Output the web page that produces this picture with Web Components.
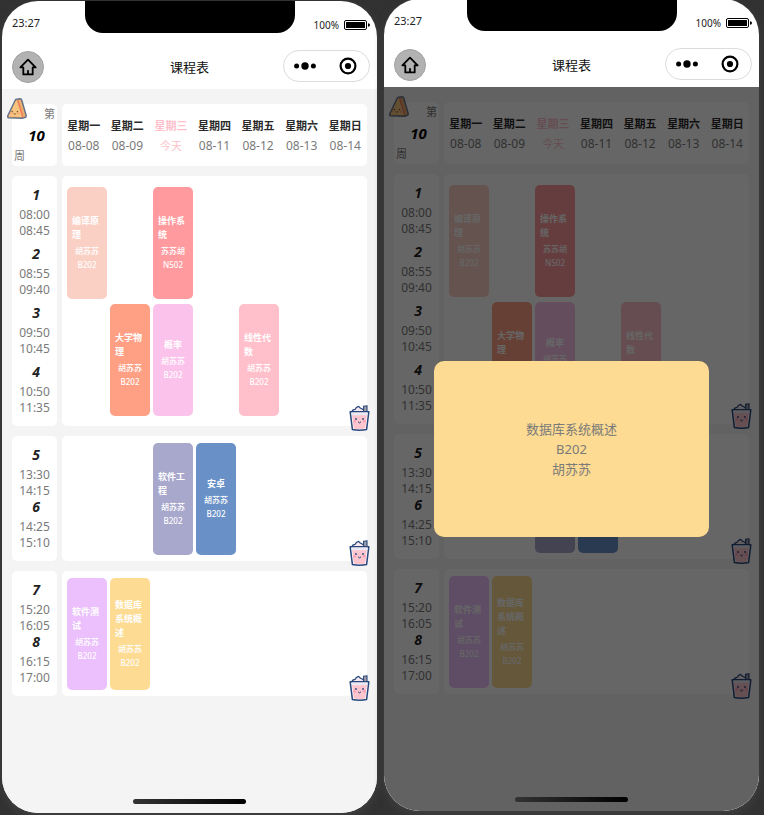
<!DOCTYPE html>
<html lang="zh-CN">
<head>
<meta charset="utf-8">
<title>课程表</title>
<style>
html { background: #fff; }
body {
  margin: 0;
  color: #7a7a7a;
  font-family: "Noto Sans", "Noto Sans CJK SC", sans-serif;
  font-size: 12px;
  line-height: 16px;
}
</style>
</head>
<body>
<phone-stage>
  <phone-frame>
    <status-bar></status-bar>
    <nav-bar>课程表</nav-bar>
    <class-schedule slot="page"></class-schedule>
  </phone-frame>
  <phone-frame>
    <status-bar></status-bar>
    <nav-bar>课程表</nav-bar>
    <class-schedule slot="page"></class-schedule>
    <course-dialog slot="page">
      <p>数据库系统概述</p>
      <p>B202</p>
      <p>胡苏苏</p>
    </course-dialog>
  </phone-frame>
</phone-stage>

<script>
function define(name, html, setup) {
  const template = document.createElement('template');
  template.innerHTML = html;
  customElements.define(name, class extends HTMLElement {
    connectedCallback() {
      if (this.shadowRoot) return;
      const root = this.attachShadow({ mode: 'open' });
      root.append(template.content.cloneNode(true));
      if (setup) setup(this, root);
    }
  });
}

define('phone-stage', `
<style>
:host {
  display: flex; align-items: flex-start; gap: 7px; box-sizing: border-box;
  min-height: 100vh; margin: -1px 3px 0 0; padding: 0 5px 2px 2px;
  background: #323232; overflow: hidden;
}
::slotted(*) { flex: 1; min-width: 0; }
::slotted(:first-child) { align-self: flex-end; }
</style>
<slot></slot>`);

define('phone-frame', `
<style>
:host {
  display: flex; flex-direction: column; position: relative;
  min-height: calc(100vh - 4px); background: #fff;
  border-radius: 36px; overflow: hidden; box-shadow: 0 4px 10px #404040;
}
.page { position: relative; flex: 1; background: #f4f4f4; }
.indicator {
  position: absolute; left: 35%; right: 35%; bottom: 9px; height: 5px;
  border-radius: 3px; background: linear-gradient(90deg, #333, #000);
}
</style>
<slot></slot>
<div class="page"><slot name="page"></slot></div>
<div class="indicator"></div>`);

define('status-bar', `
<style>
:host {
  display: grid; grid-template-columns: 1fr 210px 1fr; align-items: center;
  height: 44px; padding: 0 7px; color: #222;
}
.time { padding-left: 3px; font-size: 11px; }
.notch { align-self: start; height: 32px; background: #000; border-radius: 0 0 18px 18px; }
.power { display: flex; justify-content: flex-end; align-items: center; gap: 5px; padding-top: 4px; font-size: 10px; }
svg { width: 26px; height: 10px; }
</style>
<span class="time">23:27</span>
<span class="notch"></span>
<span class="power">100%
  <svg viewBox="0 0 26 10" aria-hidden="true">
    <rect x=".5" y=".5" width="22" height="9" rx="1.5" fill="none" stroke="#000"/>
    <rect x="2" y="2" width="19" height="6" rx=".5"/>
    <path d="M24 3.2q2 .3 2 1.8t-2 1.8z"/>
  </svg>
</span>`);

define('nav-bar', `
<style>
:host {
  display: grid; grid-template-columns: 1fr auto 1fr; align-items: center;
  height: 44px; padding: 0 7px; color: #111; font-size: 13px;
}
button { padding: 0; border: 0; background: none; display: grid; place-items: center; }
.home { width: 32px; height: 32px; margin-left: 3px; border-radius: 50%; background: #b2b2b2; border: 1px solid #a3a3a3; }
.capsule {
  justify-self: end; display: grid; grid-template-columns: 1fr 1fr; box-sizing: border-box;
  width: 87px; height: 32px; margin-bottom: 2px; border: 1px solid #dcdcdc; border-radius: 16px;
}
h1 { margin: 0; font: inherit; }
</style>
<button class="home" aria-label="主页">
  <svg width="18" height="18" viewBox="0 0 18 18" fill="none" stroke="#000" stroke-width="1.8" stroke-linejoin="round" stroke-linecap="round"><path d="M9 1.6 1.4 9.4H4.3V16.4H13.7V9.4H16.6Z"/><path d="M9 16v-3.2"/></svg>
</button>
<h1><slot></slot></h1>
<div class="capsule">
  <button aria-label="更多"><svg width="22" height="8" viewBox="0 0 22 8"><circle cx="2.6" cy="4" r="2.5"/><circle cx="11" cy="4" r="3.7"/><circle cx="19.4" cy="4" r="2.5"/></svg></button>
  <button aria-label="关闭"><svg width="18" height="18" viewBox="0 0 18 18"><circle cx="9" cy="9" r="7.4" fill="none" stroke="#000" stroke-width="2.2"/><circle cx="9" cy="9" r="3.1"/></svg></button>
</div>`);

define('sandwich-icon', `
<style>:host { display: block; width: 20px; height: 21px; } svg { display: block; width: 100%; height: 100%; }</style>
<svg viewBox="0 0 20 21" aria-hidden="true">
  <path d="M8.6 1.6 13.2.8q1.2 0 1.5 1.2L19.2 17.6q.2 1.6-1.2 1.8l-2.6.8L1.7 19.8Q.3 19.4.8 17.8Z" fill="#efa863" stroke="#66738c" stroke-width="1.5" stroke-linejoin="round"/>
  <path d="M9 2.6 1.9 17.6q0 1 .8 1l11.6.3q.9-.2.6-1.3L10 2.6Z" fill="#f7c57e"/>
  <path d="M10.6 2.2 15.8 18.8" fill="none" stroke="#ee7c60" stroke-width="1.4"/>
  <path d="M12.8 2 17.5 18.3" fill="none" stroke="#e9b377" stroke-width="1"/>
  <circle cx="5.2" cy="13.6" r=".8" fill="#805438"/><circle cx="10.4" cy="13.6" r=".8" fill="#805438"/>
  <path d="M6.5 15.4q1.4 1.9 2.7 0" fill="none" stroke="#805438" stroke-width=".9"/>
  <circle cx="3.8" cy="15.6" r="1" fill="#f5a17c"/><circle cx="12" cy="15.6" r="1" fill="#f5a17c"/>
</svg>`);

define('cup-icon', `
<style>:host { display: block; width: 21px; height: 26px; } svg { display: block; width: 100%; height: 100%; }</style>
<svg viewBox="0 0 21 26" aria-hidden="true">
  <path d="M2.6 7Q3.4 4.6 6 4.4 7 2.2 9.6 1.4q1.4 1.8 3.6 2.6l2.2 1.4L17.6 7Z" fill="#fae9f0" stroke="#27477d" stroke-width="1.2" stroke-linejoin="round"/>
  <path d="M14.6 7V1.2L18 .8V7Z" fill="#a39fa4" stroke="#27477d" stroke-width="1.1"/>
  <path d="M1.2 6.8H19.8L17.6 24.4Q10.5 26 3.4 24.4Z" fill="#fff" stroke="#27477d" stroke-width="1.5" stroke-linejoin="round"/>
  <path d="M3 9.2H18L16.4 23.5Q10.5 24.6 4.6 23.5Z" fill="#ffc5ce"/>
  <path d="M2.6 7.6h15.8l-.4 2.2q-2.7 1.2-5 0-2.2 1.6-4.6.1-2.4 1.2-5.4-.2Z" fill="#ece7f2"/>
  <circle cx="7" cy="14" r=".9" fill="#27477d"/><circle cx="14" cy="14" r=".9" fill="#27477d"/>
  <path d="M9 16.8q1.5 2.2 3 0" fill="none" stroke="#27477d"/>
  <circle cx="5.6" cy="16.2" r="1.3" fill="#ff9eb4"/><circle cx="15.4" cy="16.2" r="1.3" fill="#ff9eb4"/>
</svg>`);

define('week-badge', `
<style>
:host { display: flex; flex-direction: column; position: relative; padding: 2px; box-sizing: border-box; background: #fff; border-radius: 5px; font-size: 11px; }
sandwich-icon { position: absolute; left: -5px; top: -6px; }
.end { align-self: flex-end; }
span { line-height: 16px; }
b { flex: 1; align-content: center; text-align: center; color: #000; font-size: 15px; font-style: italic; padding-left: 4px; }
</style>
<span class="end">第</span><b>10</b><span>周</span>
<sandwich-icon></sandwich-icon>`);

define('day-heading', `
<style>
:host { display: block; text-align: center; line-height: 20px; }
b { display: block; font-size: 11px; color: #2a2a2a; }
:host([today]), :host([today]) b { color: #ffc0cb; }
:host([today]) span { font-size: 11px; }
</style>
<b></b><span></span>`, (el, root) => {
  root.querySelector('b').textContent = el.getAttribute('day');
  root.querySelector('span').textContent = el.getAttribute('date');
});

define('period-time', `
<style>
:host { display: block; text-align: center; }
b { display: block; margin-bottom: 4px; color: #222; font-size: 14px; font-style: italic; padding-left: 3px; }
span { display: block; }
</style>
<b></b><span class="from"></span><span class="to"></span>`, (el, root) => {
  root.querySelector('b').textContent = el.getAttribute('no');
  root.querySelector('.from').textContent = el.getAttribute('from');
  root.querySelector('.to').textContent = el.getAttribute('to');
});

define('course-card', `
<style>
:host { display: block; min-width: 0; }
button {
  display: flex; flex-direction: column; align-items: center; justify-content: center;
  width: 100%; min-height: 112px; padding: 0 5px; border: 0; border-radius: 5px;
  background: var(--tint); color: #fff; font: inherit; font-size: 8px; font-weight: 500; line-height: 14px;
}
b { margin-bottom: 2px; font-size: 9px; text-align: left; word-break: break-all; }
</style>
<button><b></b><span class="teacher"></span><span class="room"></span></button>`, (el, root) => {
  root.querySelector('b').textContent = el.getAttribute('name');
  root.querySelector('.teacher').textContent = el.getAttribute('teacher') || '胡苏苏';
  root.querySelector('.room').textContent = el.getAttribute('room') || 'B202';
});

define('class-schedule', `
<style>
:host { display: grid; grid-template-columns: 45px 1fr; gap: 10px 5px; padding: 15px 10px; }
.days, .times, .courses { background: #fff; border-radius: 5px; }
.days { display: grid; grid-template-columns: repeat(7, 1fr); padding: 12px 0 10px; }
.times { display: flex; flex-direction: column; padding: 11px 0 10px; }
.times.morning { gap: 7px; }
.courses { position: relative; display: grid; grid-template-columns: repeat(7, 1fr); gap: 5px 3px; align-content: start; padding: 7px 2px 6px 5px; }
.courses.morning { padding-top: 11px; padding-bottom: 10px; }
.courses > cup-icon { position: absolute; right: -3px; bottom: -5px; }
.mon { grid-column: 1; } .tue { grid-column: 2; } .wed { grid-column: 3; } .thu { grid-column: 4; } .fri { grid-column: 5; }
.second { grid-row: 2; } .first { grid-row: 1; }
</style>
<week-badge></week-badge>
<div class="days">
  <day-heading day="星期一" date="08-08"></day-heading>
  <day-heading day="星期二" date="08-09"></day-heading>
  <day-heading day="星期三" date="今天" today></day-heading>
  <day-heading day="星期四" date="08-11"></day-heading>
  <day-heading day="星期五" date="08-12"></day-heading>
  <day-heading day="星期六" date="08-13"></day-heading>
  <day-heading day="星期日" date="08-14"></day-heading>
</div>
<div class="times morning">
  <period-time no="1" from="08:00" to="08:45"></period-time>
  <period-time no="2" from="08:55" to="09:40"></period-time>
  <period-time no="3" from="09:50" to="10:45"></period-time>
  <period-time no="4" from="10:50" to="11:35"></period-time>
</div>
<div class="courses morning">
  <course-card class="mon first" name="编译原理" style="--tint:#fad0c4"></course-card>
  <course-card class="wed first" name="操作系统" teacher="苏苏胡" room="N502" style="--tint:#ff9a9e"></course-card>
  <course-card class="tue second" name="大学物理" style="--tint:#ffa085"></course-card>
  <course-card class="wed second" name="概率" style="--tint:#fbc2eb"></course-card>
  <course-card class="fri second" name="线性代数" style="--tint:#ffc0cb"></course-card>
  <cup-icon></cup-icon>
</div>
<div class="times">
  <period-time no="5" from="13:30" to="14:15"></period-time>
  <period-time no="6" from="14:25" to="15:10"></period-time>
</div>
<div class="courses">
  <course-card class="wed first" name="软件工程" style="--tint:#a8a7cc"></course-card>
  <course-card class="thu first" name="安卓" style="--tint:#6991c7"></course-card>
  <cup-icon></cup-icon>
</div>
<div class="times">
  <period-time no="7" from="15:20" to="16:05"></period-time>
  <period-time no="8" from="16:15" to="17:00"></period-time>
</div>
<div class="courses">
  <course-card class="mon first" name="软件测试" style="--tint:#ebc0fd"></course-card>
  <course-card class="tue first" name="数据库系统概述" style="--tint:#fddb92"></course-card>
  <cup-icon></cup-icon>
</div>`);

define('course-dialog', `
<style>
:host { position: absolute; inset: 0; display: grid; place-items: center; background: rgba(0, 0, 0, .6); }
section {
  width: 275px; box-sizing: border-box; padding: 58px 20px; border-radius: 10px;
  background: #fddb92; text-align: center; font-size: 13px; line-height: 20px;
}
::slotted(p) { margin: 0; }
</style>
<section role="dialog" aria-label="课程详情"><slot></slot></section>`);
</script>
</body>
</html>
